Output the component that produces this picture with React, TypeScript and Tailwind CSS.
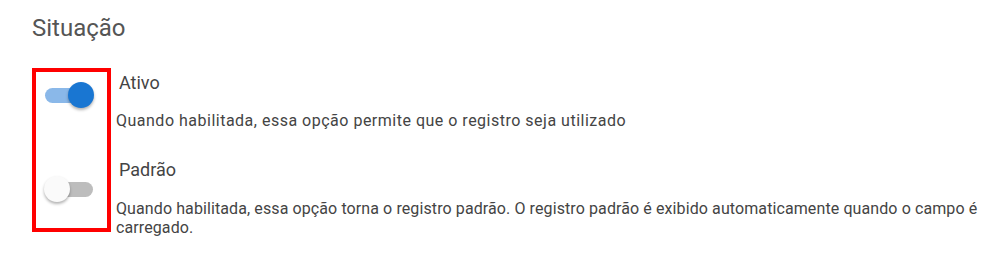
import { useState } from 'react'

function Toggle({ checked, onChange }: { checked: boolean; onChange: () => void }) {
  return (
    <button
      type="button"
      onClick={onChange}
      className="relative flex h-[26px] w-[50px] items-center"
      aria-pressed={checked}
    >
      <span
        className={
          checked
            ? 'mx-[1px] h-[15px] w-[48px] rounded-full bg-[#8ab8e9]'
            : 'mx-[1px] h-[15px] w-[48px] rounded-full bg-[#bdbdbd]'
        }
      />
      <span
        className={
          checked
            ? 'absolute right-0 top-0 h-[26px] w-[26px] rounded-full bg-[#1976d2] shadow-[0_2px_3px_rgba(0,0,0,0.3)]'
            : 'absolute left-0 top-0 h-[26px] w-[26px] rounded-full bg-[#fafafa] shadow-[0_2px_3px_rgba(0,0,0,0.3)]'
        }
      />
    </button>
  )
}

export default function App() {
  const [ativo, setAtivo] = useState(true)
  const [padrao, setPadrao] = useState(false)

  return (
    <div className="min-h-screen bg-white pt-[12px] pl-[32px] font-['Roboto',sans-serif]">
      <h2 className="text-[24px] leading-[32px] font-normal text-[#555555]">Situação</h2>

      <div className="mt-[24px] flex items-start">
        <div className="flex h-[164px] w-[79px] flex-col border-4 border-[#ff0000] pl-[8px]">
          <div className="mt-[10px]">
            <Toggle checked={ativo} onChange={() => setAtivo(!ativo)} />
          </div>
          <div className="mt-[68px]">
            <Toggle checked={padrao} onChange={() => setPadrao(!padrao)} />
          </div>
        </div>

        <div className="ml-[5px] flex-1 pt-[3px] text-[#444444]">
          <div className="pl-[3px] text-[18px] leading-[24px]">Ativo</div>
          <p className="mt-[16px] text-[16px] leading-[19px] tracking-[0.5px]">
            Quando habilitada, essa opção permite que o registro seja utilizado
          </p>
          <div className="mt-[28px] pl-[3px] text-[18px] leading-[24px]">Padrão</div>
          <p className="mt-[17px] text-[16px] leading-[19px] tracking-[0.1px]">
            Quando habilitada, essa opção torna o registro padrão. O registro padrão é exibido
            automaticamente quando o campo é carregado.
          </p>
        </div>
      </div>
    </div>
  )
}
